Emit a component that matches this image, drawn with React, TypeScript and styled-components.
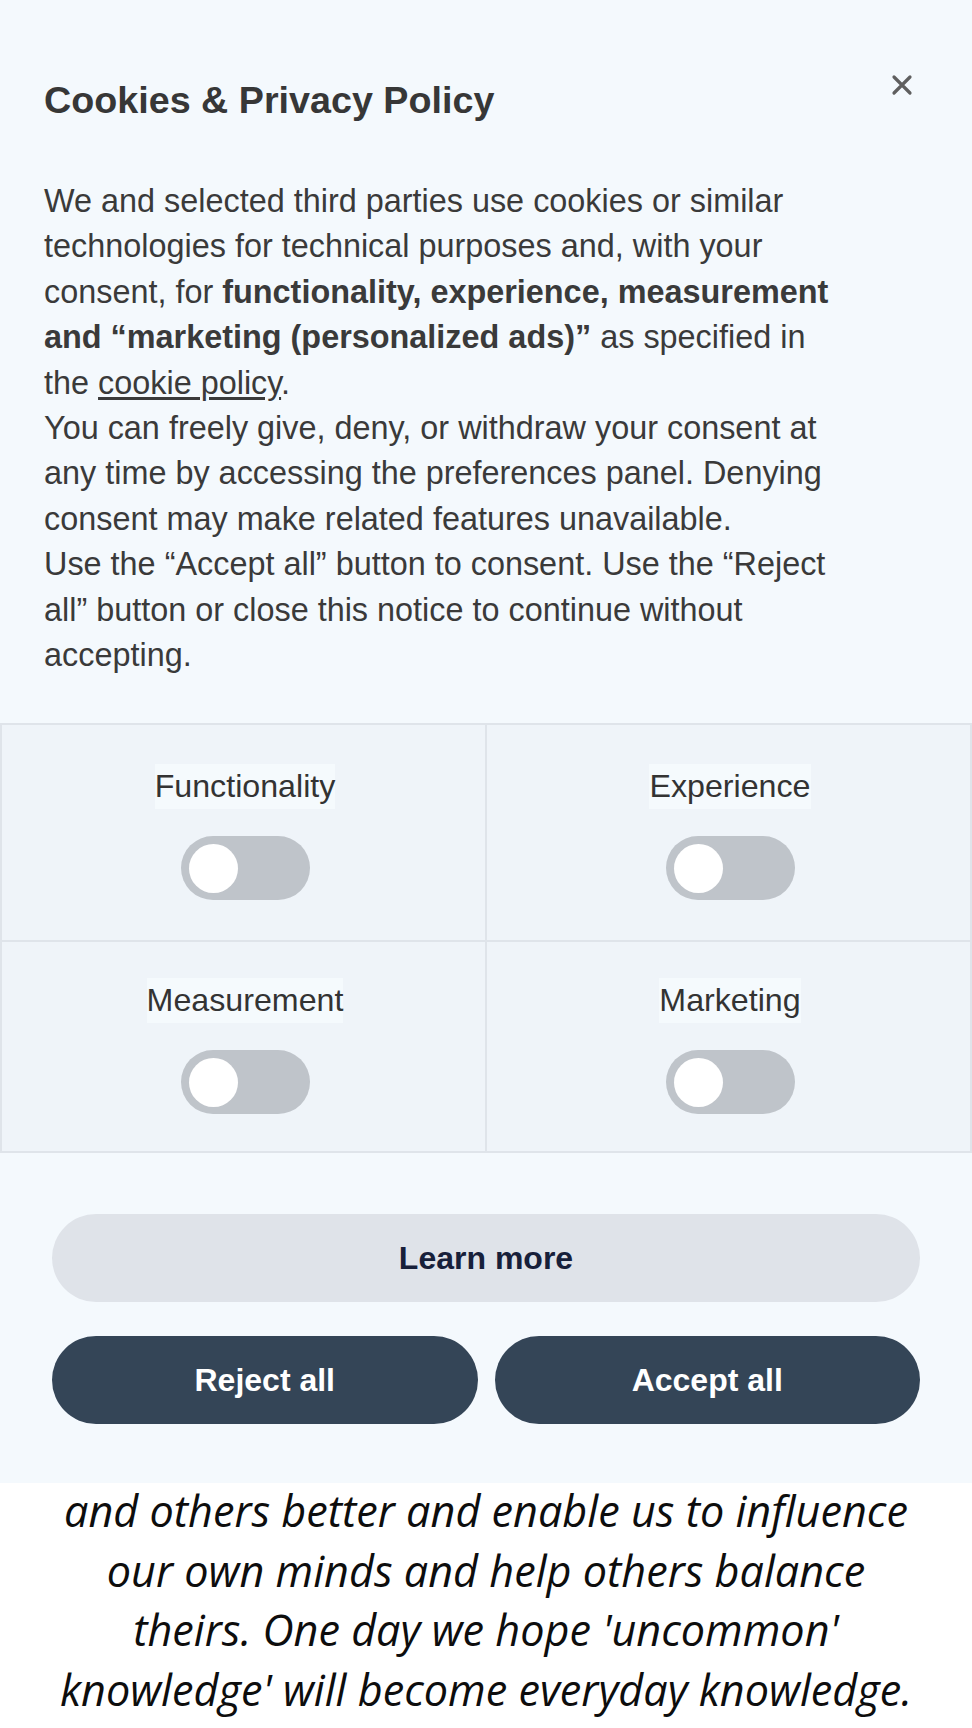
import React from "react";
import styled, { createGlobalStyle } from "styled-components";

const GlobalStyle = createGlobalStyle`
  html, body {
    margin: 0;
    padding: 0;
    background: #ffffff;
  }
  body {
    font-family: "Liberation Sans", Arial, Helvetica, sans-serif;
  }
`;

const purposes = ["Functionality", "Experience", "Measurement", "Marketing"];

const quoteLines = [
  "and others better and enable us to influence",
  "our own minds and help others balance",
  "theirs. One day we hope 'uncommon'",
  "knowledge' will become everyday knowledge.",
];

const CloseIcon: React.FC = () => (
  <svg width="22" height="22" viewBox="0 0 22 22" aria-hidden="true">
    <path d="M3 3 L19 19 M19 3 L3 19" stroke="#5f5f5f" strokeWidth="3.2" strokeLinecap="round" />
  </svg>
);

export default function App() {
  return (
    <>
      <GlobalStyle />
      <SBanner>
        <SHeader>
          <STitle>Cookies &amp; Privacy Policy</STitle>
          <SClose aria-label="Close">
            <CloseIcon />
          </SClose>
        </SHeader>

        <SText>
          <p>
            We and selected third parties use cookies or similar technologies for technical
            purposes and, with your consent, for{" "}
            <strong>
              functionality, experience, measurement and “marketing (personalized ads)”
            </strong>{" "}
            as specified in the <SLink href="#">cookie policy</SLink>.
          </p>
          <p>
            You can freely give, deny, or withdraw your consent at any time by accessing the
            preferences panel. Denying consent may make related features unavailable.
          </p>
          <p>
            Use the “Accept all” button to consent. Use the “Reject all” button or close this
            notice to continue without accepting.
          </p>
        </SText>

        <SGrid>
          {purposes.map((name, i) => (
            <SCell key={name} $row={i < 2 ? 1 : 2}>
              <SLabel>{name}</SLabel>
              <SToggle role="switch" aria-checked={false} aria-label={name}>
                <SKnob />
              </SToggle>
            </SCell>
          ))}
        </SGrid>

        <SActions>
          <SButton $variant="light">Learn more</SButton>
          <SButtonRow>
            <SButton $variant="dark">Reject all</SButton>
            <SButton $variant="dark">Accept all</SButton>
          </SButtonRow>
        </SActions>
      </SBanner>

      <SQuote>
        {quoteLines.map((line) => (
          <span key={line}>{line}</span>
        ))}
      </SQuote>
    </>
  );
}

const SBanner = styled.section`
  background: #f4f9fd;
  padding: 79px 0 59px;
  color: #3a3a3a;
`;

const SHeader = styled.div`
  display: flex;
  justify-content: space-between;
  align-items: flex-start;
  padding: 0 59px 0 44px;
`;

const STitle = styled.h2`
  margin: 0;
  font-size: 37.7px;
  line-height: 43px;
  font-weight: 700;
  color: #373737;
`;

const SClose = styled.button`
  background: transparent;
  border: none;
  padding: 0;
  margin-top: -5px;
  width: 22px;
  height: 22px;
  cursor: pointer;
  display: flex;
`;

const SText = styled.div`
  margin-top: 57px;
  padding: 0 44px;
  max-width: 800px;
  font-size: 32.4px;
  line-height: 45.4px;

  p {
    margin: 0;
  }

  strong {
    font-weight: 700;
  }
`;

const SLink = styled.a`
  color: inherit;
  text-decoration: underline;
  text-underline-offset: 3px;
`;

const SGrid = styled.div`
  margin-top: 45px;
  display: grid;
  grid-template-columns: 1fr 1fr;
  gap: 2px;
  background: #dfe4ea;
  border: 2px solid #dfe4ea;
`;

const SCell = styled.div<{ $row: 1 | 2 }>`
  background: #eff4f9;
  height: ${(p) => (p.$row === 1 ? 215 : 209)}px;
  box-sizing: border-box;
  padding-top: ${(p) => (p.$row === 1 ? 39 : 36)}px;
  padding-left: 3px;
  display: flex;
  flex-direction: column;
  align-items: center;
  gap: 27px;
`;

const SLabel = styled.span`
  background: #f5fafd;
  font-size: 32.2px;
  line-height: 45px;
  color: #333333;
`;

const SToggle = styled.button`
  width: 129px;
  height: 64px;
  border: none;
  border-radius: 32px;
  background: #bfc4ca;
  padding: 8px;
  display: flex;
  align-items: center;
  cursor: pointer;
`;

const SKnob = styled.span`
  width: 49px;
  height: 49px;
  border-radius: 50%;
  background: #ffffff;
`;

const SActions = styled.div`
  margin-top: 61px;
  padding: 0 52px;
  display: flex;
  flex-direction: column;
  gap: 34px;
`;

const SButtonRow = styled.div`
  display: grid;
  grid-template-columns: 1fr 1fr;
  gap: 17px;
`;

const SButton = styled.button<{ $variant: "light" | "dark" }>`
  height: 88px;
  border: none;
  border-radius: 44px;
  font-family: "Liberation Sans", Arial, sans-serif;
  font-size: 32px;
  font-weight: 700;
  cursor: pointer;
  background: ${(p) => (p.$variant === "dark" ? "#344557" : "#dfe3e9")};
  color: ${(p) => (p.$variant === "dark" ? "#ffffff" : "#17203a")};
`;

const SQuote = styled.p`
  margin: -2px 0 0;
  display: flex;
  flex-direction: column;
  align-items: center;
  font-family: "Open Sans", sans-serif;
  font-style: italic;
  font-size: 43.2px;
  line-height: 59.5px;
  color: #0d0d0d;
  text-align: center;
  white-space: nowrap;
`;
